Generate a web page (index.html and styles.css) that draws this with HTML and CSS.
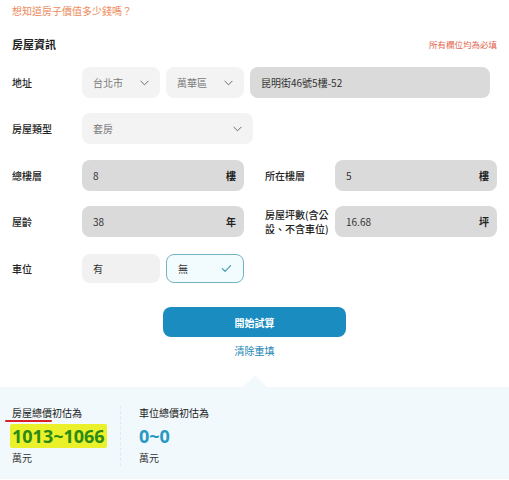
FILE: index.html
```html
<!DOCTYPE html>
<html lang="zh-Hant">
<head>
<meta charset="utf-8">
<title>房屋估價</title>
<link rel="stylesheet" href="styles.css">
</head>
<body>
<div class="page">
  <p class="intro">想知道房子價值多少錢嗎？</p>
  <div class="section-head">
    <h2 class="section-title">房屋資訊</h2>
    <span class="required">所有欄位均為必填</span>
  </div>

  <div class="row">
    <div class="label">地址</div>
    <div class="fields">
      <div class="select short"><span>台北市</span><svg class="chev" viewBox="0 0 10 6"><path d="M1 1l4 4 4-4"/></svg></div>
      <div class="select short"><span>萬華區</span><svg class="chev" viewBox="0 0 10 6"><path d="M1 1l4 4 4-4"/></svg></div>
      <div class="input address"><span>昆明街46號5樓-52</span></div>
    </div>
  </div>

  <div class="row">
    <div class="label">房屋類型</div>
    <div class="fields">
      <div class="select type"><span>套房</span><svg class="chev" viewBox="0 0 10 6"><path d="M1 1l4 4 4-4"/></svg></div>
    </div>
  </div>

  <div class="pair first">
    <div class="row">
      <div class="label">總樓層</div>
      <div class="input grow"><span>8</span><b class="unit">樓</b></div>
    </div>
    <div class="row">
      <div class="label">所在樓層</div>
      <div class="input grow"><span>5</span><b class="unit">樓</b></div>
    </div>
  </div>

  <div class="pair">
    <div class="row">
      <div class="label">屋齡</div>
      <div class="input grow"><span>38</span><b class="unit">年</b></div>
    </div>
    <div class="row">
      <div class="label two-line">房屋坪數(含公設、不含車位)</div>
      <div class="input grow"><span>16.68</span><b class="unit">坪</b></div>
    </div>
  </div>

  <div class="row parking">
    <div class="label">車位</div>
    <div class="fields">
      <div class="option">有</div>
      <div class="option selected"><span>無</span><svg class="check" viewBox="0 0 12 10"><path d="M1.5 5.2l3 3 6-6.4"/></svg></div>
    </div>
  </div>

  <div class="actions">
    <button class="submit">開始試算</button>
    <div class="reset">清除重填</div>
  </div>
</div>

<div class="result">
  <div class="pointer"></div>
  <div class="result-col">
    <div class="result-label"><span class="mark">房屋總價</span>初估為</div>
    <div class="result-value green"><span class="hl">1013~1066</span></div>
    <div class="result-unit">萬元</div>
  </div>
  <div class="divider"></div>
  <div class="result-col">
    <div class="result-label">車位總價初估為</div>
    <div class="result-value blue">0~0</div>
    <div class="result-unit">萬元</div>
  </div>
</div>
</body>
</html>
```

FILE: styles.css
```css
* { box-sizing: border-box; }
html, body { margin: 0; padding: 0; background: #fff; }
body {
  width: 509px;
  height: 480px;
  overflow: hidden;
  font-family: "Noto Sans CJK TC", "Noto Sans", sans-serif;
  color: #222;
}
.page { padding: 0 12px; }
.intro {
  margin: 0;
  padding-top: 4px;
  font-size: 10px;
  line-height: 14px;
  color: #ec8b5e;
}
.section-head {
  display: flex;
  justify-content: space-between;
  align-items: center;
  margin-top: 18px;
  height: 16px;
}
.section-title {
  margin: 0;
  font-size: 11px;
  font-weight: 700;
  color: #222;
}
.required {
  font-size: 8.5px;
  color: #e2644c;
}
.row {
  display: flex;
  align-items: center;
  height: 31px;
  margin-top: 15px;
}
.label {
  width: 70px;
  flex: none;
  font-size: 10px;
  font-weight: 500;
  color: #222;
}
.label.two-line { line-height: 14px; }
.fields {
  display: flex;
  gap: 6px;
  height: 100%;
  flex: 1;
}
.select, .input, .option {
  display: flex;
  align-items: center;
  justify-content: space-between;
  height: 31px;
  padding: 0 11px;
  border-radius: 8px;
  font-size: 10px;
}
.select {
  background: #f3f3f3;
  color: #7a7a7a;
}
.select.short { width: 78px; }
.select.type { width: 171px; }
.chev {
  width: 9px;
  height: 6px;
  fill: none;
  stroke: #6a6a6a;
  stroke-width: 1.1;
  stroke-linecap: round;
  stroke-linejoin: round;
}
.input {
  background: #dadada;
  color: #333;
}
.input.address { width: 240px; }
.input.grow { flex: 1; padding-right: 8px; }
.unit { font-weight: 700; color: #222; font-size: 10px; }
.pair {
  display: grid;
  grid-template-columns: 1fr 1fr;
  column-gap: 21px;
}
.pair .row { margin-top: 15px; }
.pair.first .row { margin-top: 16px; }
.row.parking { height: 29px; margin-top: 17px; }
.option {
  width: 78px;
  height: 29px;
  background: #f1f1f1;
  color: #333;
}
.option.selected {
  background: #f2fbfd;
  border: 1px solid #72b4c2;
}
.check {
  width: 11px;
  height: 9px;
  fill: none;
  stroke: #4ea5b9;
  stroke-width: 1.5;
  stroke-linecap: round;
  stroke-linejoin: round;
}
.actions {
  display: flex;
  flex-direction: column;
  align-items: center;
  margin-top: 24px;
}
.submit {
  width: 183px;
  height: 30px;
  border: none;
  border-radius: 8px;
  background: #1b8cc0;
  color: #fff;
  font-family: inherit;
  font-size: 10px;
  font-weight: 700;
}
.reset {
  margin-top: 6px;
  font-size: 10px;
  line-height: 16px;
  color: #1c87b3;
}
.result {
  position: relative;
  margin-top: 28px;
  height: 92px;
  background: #f1f9fd;
  display: flex;
  padding: 19px 0 0 12px;
}
.pointer {
  position: absolute;
  left: 243px;
  top: -12px;
  width: 0;
  height: 0;
  border-left: 12px solid transparent;
  border-right: 12px solid transparent;
  border-bottom: 12px solid #f1f9fd;
}
.result-col { width: 108px; }
.result-label {
  font-size: 10px;
  line-height: 14px;
  color: #222;
}
.mark {
  position: relative;
}
.mark::after {
  content: "";
  position: absolute;
  left: -7px;
  right: 0;
  bottom: -2px;
  height: 2px;
  border-radius: 1px;
  background: #d82028;
}
.result-value {
  margin-top: 4px;
  font-family: "Noto Sans", sans-serif;
  font-size: 18px;
  font-weight: 700;
  line-height: 24px;
}
.green { color: #2b8a14; }
.hl {
  background: #eaf02a;
  padding: 0 2px;
  margin-left: -2px;
  border-radius: 2px;
}
.blue { color: #2698c4; }
.result-unit {
  margin-top: 3px;
  font-size: 10px;
  line-height: 14px;
  color: #333;
}
.divider {
  width: 0;
  height: 60px;
  border-left: 1px dashed #dfe9ef;
  margin: 0 18px 0 0;
}
```
